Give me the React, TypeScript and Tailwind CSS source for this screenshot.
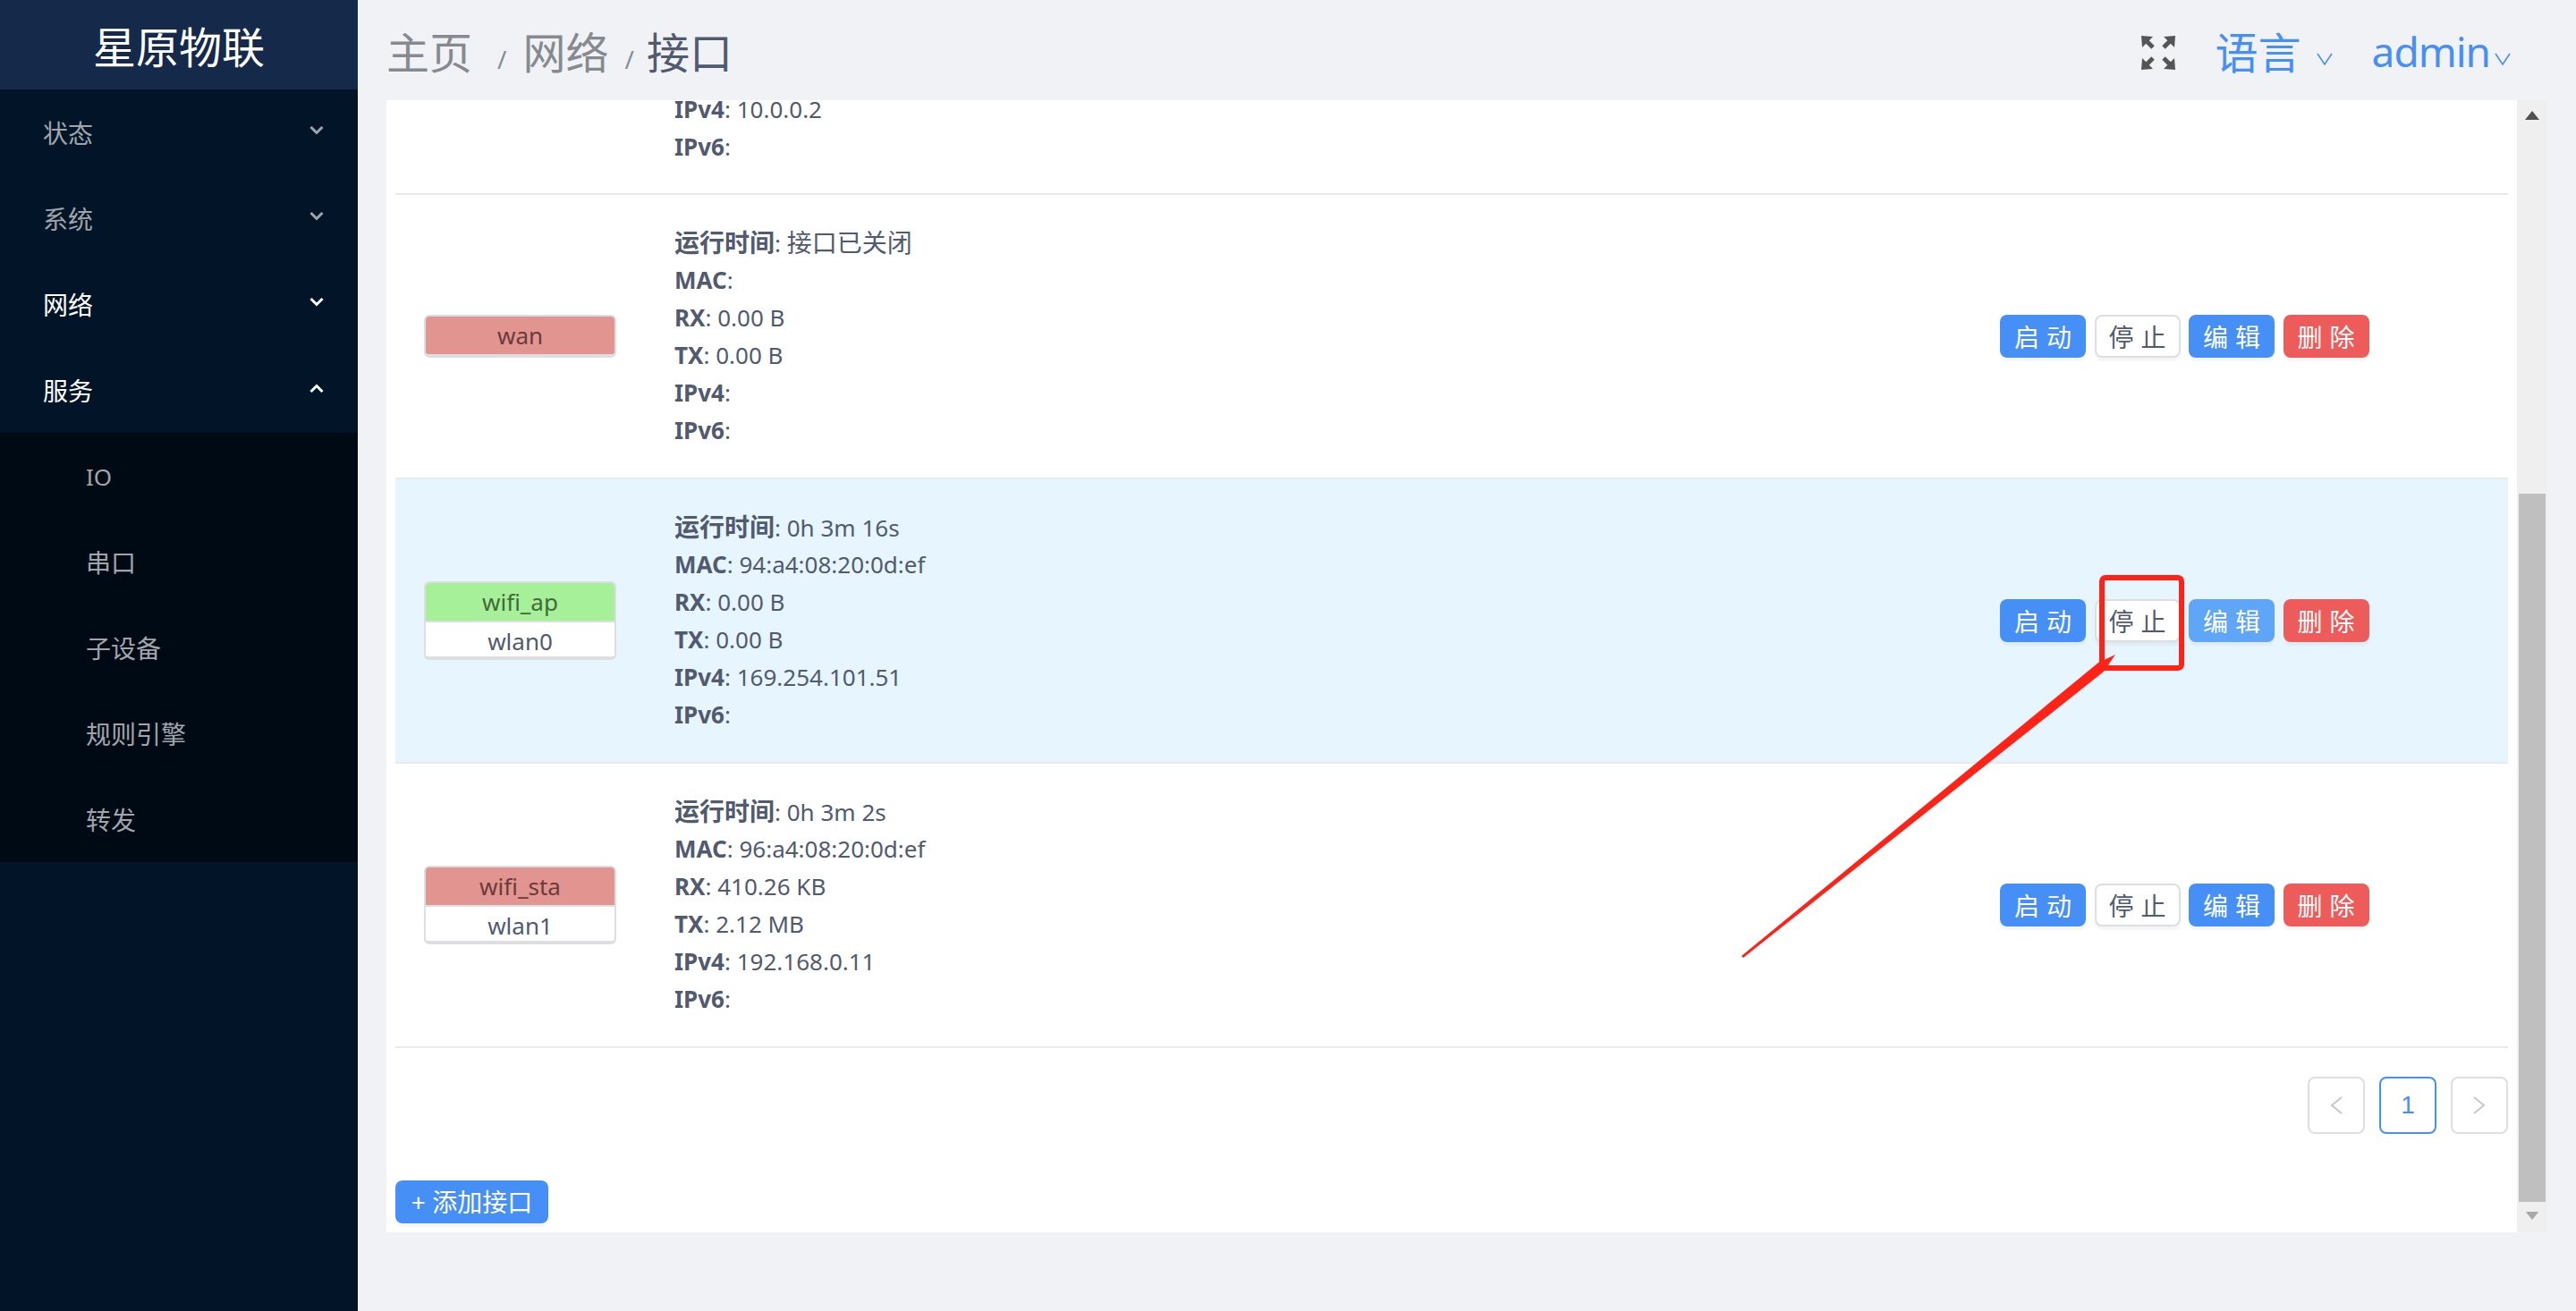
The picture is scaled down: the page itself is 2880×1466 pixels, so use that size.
// App.tsx
import React from 'react';

const FONT = "font-['Noto_Sans','Noto_Sans_CJK_SC',sans-serif]";

const Chevron = ({ up, className }: { up?: boolean; className: string }) => (
  <svg viewBox="0 0 16 10" className={className} fill="none" stroke="currentColor" strokeWidth="3">
    <path d={up ? 'M1.5 9 L8 2.5 L14.5 9' : 'M1.5 1 L8 7.5 L14.5 1'} />
  </svg>
);

const ThinChevron = () => (
  <svg viewBox="0 0 18 14" className="w-[18px] h-[14px] text-[#468ff7]" fill="none" stroke="currentColor" strokeWidth="1.6">
    <path d="M1 1 L9 13 L17 1" />
  </svg>
);

const ExpandIcon = () => (
  <svg viewBox="0 0 38 38" className="w-[38px] h-[38px] text-[#555555]" fill="currentColor" stroke="currentColor">
    <polygon points="0,0 13,1 1,13" strokeWidth="0" />
    <line x1="5" y1="5" x2="13" y2="13" strokeWidth="5" />
    <polygon points="38,0 25,1 37,13" strokeWidth="0" />
    <line x1="33" y1="5" x2="25" y2="13" strokeWidth="5" />
    <polygon points="0,38 13,37 1,25" strokeWidth="0" />
    <line x1="5" y1="33" x2="13" y2="25" strokeWidth="5" />
    <polygon points="38,38 25,37 37,25" strokeWidth="0" />
    <line x1="33" y1="33" x2="25" y2="25" strokeWidth="5" />
  </svg>
);

const menus = [
  { label: '状态', active: false, open: false },
  { label: '系统', active: false, open: false },
  { label: '网络', active: true, open: false },
  { label: '服务', active: true, open: true },
];

const subMenus = ['IO', '串口', '子设备', '规则引擎', '转发'];

const Sidebar = () => (
  <aside className="w-[400px] shrink-0 bg-[#021427] flex flex-col">
    <div className="h-[100px] bg-[#15294b] flex items-center justify-center text-white text-[48px] leading-none pt-[6px]">
      星原物联
    </div>
    {menus.map((m) => (
      <div
        key={m.label}
        className={`h-[96px] flex items-center justify-between pl-[48px] pr-[38px] text-[28px] ${
          m.active ? 'text-white' : 'text-[#a0a5ab]'
        }`}
      >
        <span className="pt-[2px]">{m.label}</span>
        <Chevron up={m.open} className="w-[16px] h-[10px] mb-[4px]" />
      </div>
    ))}
    <div className="bg-[#000a15]">
      {subMenus.map((s) => (
        <div key={s} className={`h-[96px] flex items-center pl-[96px] pt-[2px] text-[#a0a5ab] ${s === 'IO' ? 'text-[26px]' : 'text-[28px]'}`}>
          {s}
        </div>
      ))}
    </div>
  </aside>
);

const TopBar = () => (
  <header className="h-[112px] flex items-center justify-between pr-[41px] pt-[5px]">
    <div className="flex items-baseline text-[48px] leading-none text-[#868a90]">
      <span>主页</span>
      <span className="text-[28px] ml-[28px] mr-[18px] text-[#8a8e94]">/</span>
      <span>网络</span>
      <span className="text-[28px] ml-[18px] mr-[14px] text-[#8a8e94]">/</span>
      <span className="text-[#515a6e]">接口</span>
    </div>
    <div className="flex items-center text-[#468ff7]">
      <ExpandIcon />
      <span className="text-[48px] leading-none ml-[45px]">语言</span>
      <span className="ml-[17px] mt-[14px]"><ThinChevron /></span>
      <span className="text-[46px] leading-none ml-[44px] mb-[4px] tracking-[-1px]">admin</span>
      <span className="ml-[5px] mt-[14px]"><ThinChevron /></span>
    </div>
  </header>
);

interface Iface {
  name: string;
  device?: string;
  up: boolean;
  uptime: string;
  mac: string;
  rx: string;
  tx: string;
  ipv4: string;
  highlighted?: boolean;
}

const interfaces: Iface[] = [
  { name: 'wan', up: false, uptime: '接口已关闭', mac: '', rx: '0.00 B', tx: '0.00 B', ipv4: '' },
  {
    name: 'wifi_ap',
    device: 'wlan0',
    up: true,
    uptime: '0h 3m 16s',
    mac: '94:a4:08:20:0d:ef',
    rx: '0.00 B',
    tx: '0.00 B',
    ipv4: '169.254.101.51',
    highlighted: true,
  },
  {
    name: 'wifi_sta',
    device: 'wlan1',
    up: false,
    uptime: '0h 3m 2s',
    mac: '96:a4:08:20:0d:ef',
    rx: '410.26 KB',
    tx: '2.12 MB',
    ipv4: '192.168.0.11',
  },
];

// latin runs are set a bit smaller than the chinese ones, closer to the original font
const Line = ({ label, value }: { label: string; value?: string }) => (
  <p className="h-[42px] leading-[42px] whitespace-nowrap text-[26px]">
    <b className={`font-bold ${label === '运行时间' ? 'text-[28px]' : ''}`}>{label}</b>:{' '}
    <span className={value === '接口已关闭' ? 'text-[28px]' : ''}>{value}</span>
  </p>
);

const Badge = ({ iface }: { iface: Iface }) => (
  <div className="w-[215px] rounded-[6px] border-2 border-[#dcdee2] border-b-4 overflow-hidden text-[26px] text-center bg-white">
    <div className={`h-[42px] leading-[42px] ${iface.up ? 'bg-[#a7f09a] text-[#3f6b38]' : 'bg-[#e29490] text-[#6b3b3a]'}`}>
      {iface.name}
    </div>
    {iface.device && <div className="h-[42px] leading-[42px] border-t-2 border-[#dcdee2] -mb-[2px]">{iface.device}</div>}
  </div>
);

const ActionButton = ({ label, kind }: { label: string; kind: 'blue' | 'light' | 'white' | 'red' }) => {
  const colours = {
    blue: 'bg-[#468ff7] text-white',
    light: 'bg-[#5fa5f8] text-white',
    white: 'bg-white text-[#515a6e] border-2 border-[#dcdee2]',
    red: 'bg-[#ed5c5a] text-white',
  };
  return (
    <button className={`w-[96px] h-[48px] rounded-[8px] text-[28px] leading-none tracking-[8px] pl-[8px] pt-[2px] shadow-[0_4px_2px_rgba(0,0,0,0.04)] ${colours[kind]}`}>
      {label}
    </button>
  );
};

const Row = ({ iface }: { iface: Iface }) => (
  <div className={`h-[318px] border-b-2 border-[#e8eaec] flex items-center ${iface.highlighted ? 'bg-[#e6f5ff]' : ''}`}>
    <div className="w-[312px] pl-[32px] shrink-0">
      <Badge iface={iface} />
    </div>
    <div className="flex-1">
      <Line label="运行时间" value={iface.uptime} />
      <Line label="MAC" value={iface.mac} />
      <Line label="RX" value={iface.rx} />
      <Line label="TX" value={iface.tx} />
      <Line label="IPv4" value={iface.ipv4} />
      <Line label="IPv6" />
    </div>
    <div className="w-[568px] shrink-0 flex gap-[9.5px]">
      <ActionButton label="启动" kind="blue" />
      <ActionButton label="停止" kind="white" />
      <ActionButton label="编辑" kind={iface.highlighted ? 'light' : 'blue'} />
      <ActionButton label="删除" kind="red" />
    </div>
  </div>
);

const Pagination = () => (
  <div className="flex justify-end gap-[16px] mt-[32px] text-[#c5c8ce]">
    <div className="w-[64px] h-[64px] rounded-[8px] border-2 border-[#dcdee2] flex items-center justify-center">
      <svg viewBox="0 0 14 20" className="w-[14px] h-[20px]" fill="none" stroke="currentColor" strokeWidth="2"><path d="M13 1 L2 10 L13 19" /></svg>
    </div>
    <div className="w-[64px] h-[64px] rounded-[8px] border-2 border-[#468ff7] flex items-center justify-center text-[28px] text-[#468ff7] font-['Liberation_Sans',sans-serif]">
      1
    </div>
    <div className="w-[64px] h-[64px] rounded-[8px] border-2 border-[#dcdee2] flex items-center justify-center">
      <svg viewBox="0 0 14 20" className="w-[14px] h-[20px]" fill="none" stroke="currentColor" strokeWidth="2"><path d="M1 1 L12 10 L1 19" /></svg>
    </div>
  </div>
);

const FakeScrollbar = () => (
  <div className="w-[34px] shrink-0 bg-[#efefef] flex flex-col items-center pl-[2px] pr-[2px]">
    <div className="h-[440px] w-full flex justify-center pt-[12px]">
      <svg viewBox="0 0 16 10" className="w-[16px] h-[10px] text-[#505050]" fill="currentColor"><polygon points="8,0 16,10 0,10" /></svg>
    </div>
    <div className="w-full h-[792px] bg-[#bfbfbf]" />
    <div className="h-[34px] w-full flex justify-center pt-[11px]">
      <svg viewBox="0 0 16 10" className="w-[16px] h-[9px] text-[#a8a8a8]" fill="currentColor"><polygon points="0,0 16,0 8,10" /></svg>
    </div>
  </div>
);

// red markup drawn on top of the screenshot
const Annotation = () => (
  <svg className="absolute left-0 top-0 w-[2880px] h-[1466px] pointer-events-none" viewBox="0 0 2880 1466">
    <rect x="2350" y="646" width="89" height="101" rx="4" fill="none" stroke="#ff2216" strokeWidth="6" />
    <polygon points="1947,1069 2346,741 2365,732 2352,751 1949,1071" fill="#ff2216" />
  </svg>
);

export default function App() {
  return (
    <div className={`relative flex w-[2880px] h-[1466px] overflow-hidden bg-[#f0f2f6] text-[#515a6e] ${FONT}`}>
      <Sidebar />
      <main className="flex-1 flex flex-col pl-[32px] pr-[32px]">
        <TopBar />
        <div className="h-[1266px] flex overflow-hidden">
          <div className="flex-1 bg-white px-[10px] text-[28px] overflow-hidden">
            <div className="h-[106px] border-b-2 border-[#e8eaec] pl-[312px] flex flex-col">
              <div className="-mt-[11px]">
                <Line label="IPv4" value="10.0.0.2" />
                <Line label="IPv6" />
              </div>
            </div>
            {interfaces.map((i) => (
              <Row key={i.name} iface={i} />
            ))}
            <Pagination />
            <button className="block mt-[52px] w-[171px] h-[48px] rounded-[8px] bg-[#468ff7] text-white text-[28px] leading-none shadow-[0_4px_2px_rgba(0,0,0,0.04)]">
              + 添加接口
            </button>
          </div>
          <FakeScrollbar />
        </div>
      </main>
      <Annotation />
    </div>
  );
}
